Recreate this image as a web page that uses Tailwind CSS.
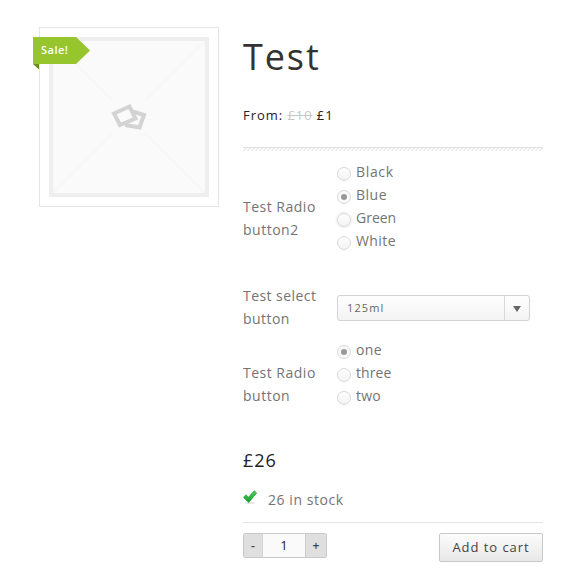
<!DOCTYPE html>
<html lang="en"><head><meta charset="utf-8"><title>Test</title>
<script src="https://cdn.jsdelivr.net/npm/@tailwindcss/browser@4"></script></head>
<body class="bg-white">
<main class="flex w-[576px] h-[572px] overflow-hidden pl-[39px] pt-[27px] font-['Open_Sans',sans-serif] text-[14px] leading-[23px] text-[#747474]">
<div class="relative w-[180px] h-[180px] shrink-0 border border-[#e5e5e5] p-[9px]">
<svg class="w-[160px] h-[160px]" viewBox="0 0 160 160" fill="none">
<rect x="2" y="2" width="156" height="156" fill="#fafafa" stroke="#eee" stroke-width="4"/>
<path d="M4 4 64 64M156 4 96 64M4 156 64 96M156 156 96 96" stroke="#f5f5f5" stroke-width="1.300"/>
<path d="M76 88 90.500 90.500 95 78 84 74.500" stroke="#d3d3d3" stroke-width="4"/>
<path d="M65 76.500 80.500 69.500 86.500 81.500 71 88Z" fill="#fafafa" stroke="#d3d3d3" stroke-width="4"/>
</svg>
<div class="absolute -left-[7px] top-[9px] w-[57px] h-[33px]">
<svg class="absolute inset-0" width="57" height="33"><path d="M0 27H6V32.500Z" fill="#698f1c"/><path d="M0 0H43L57 13.500 43 27H0Z" fill="#96c52d"/></svg>
<span class="absolute left-[8px] top-[1px] text-[11px] tracking-[.5px] font-semibold text-white">Sale!</span>
</div>
</div>
<section class="ml-[24px] w-[300px]">
<h1 class="h-[60px] text-[36px] leading-[60px] tracking-[1.900px] text-[#333]">Test</h1>
<p class="mt-[17px] text-[13px] tracking-[.95px] text-[#222]">From: <del class="text-[#c7c7c7]">£10</del> £1</p>
<svg class="mt-[20px] block" width="300" height="4" shape-rendering="crispEdges"><defs><pattern id="hatch" width="4" height="3" y="1" patternUnits="userSpaceOnUse"><path d="M2 0h1v1H2zM3 0h1v1H3zM1 1h1v1H1zM2 1h1v1H2zM0 2h1v1H0zM1 2h1v1H1z" fill="#ececec"/></pattern></defs><rect width="300" height="1" fill="#e0e0e0"/><rect y="1" width="300" height="3" fill="url(#hatch)"/></svg>
<div class="mt-[10px] flex h-[92px]">
<div class="-mt-px w-[94px] pt-[35px] tracking-[.5px]">Test Radio<br>button2</div>
<div class="tracking-[.4px]">
<div class="flex gap-[5px]"><i class="mt-[6px] size-[14px] rounded-full border border-[#d8d8d8] bg-linear-to-b from-white to-[#f3f3f3]"></i><span class="-mt-px mb-px tracking-[.65px]">Black</span></div>
<div class="flex gap-[5px]"><i class="mt-[6px] grid place-items-center size-[14px] rounded-full border border-[#d8d8d8] bg-[#fafafa]"><b class="size-[6px] rounded-full bg-[#999]"></b></i><span class="-mt-px mb-px tracking-[.5px]">Blue</span></div>
<div class="flex gap-[5px]"><i class="mt-[6px] size-[14px] rounded-full border border-[#d8d8d8] bg-linear-to-b from-white to-[#f3f3f3] shadow-[0_0_3px_#d8d8d8]"></i><span class="-mt-px mb-px tracking-[0px]">Green</span></div>
<div class="flex gap-[5px]"><i class="mt-[6px] size-[14px] rounded-full border border-[#d8d8d8] bg-linear-to-b from-white to-[#f3f3f3]"></i><span class="-mt-px mb-px tracking-[.4px]">White</span></div>
</div></div>
<div class="mt-[32px] flex h-[46px]">
<div class="-mt-px w-[94px] tracking-[.45px]">Test select<br>button</div>
<div class="mt-[10px] flex h-[26px] w-[193px] rounded-[3px] border border-[#d2d2d2] bg-linear-to-b from-white to-[#f3f3f3]">
<span class="flex-1 pl-[9px] text-[11px] leading-[24px] tracking-[1.100px] text-[#666]">125ml</span>
<span class="flex w-[25px] items-center justify-center border-l border-[#d8d8d8]"><svg class="mt-px" width="8" height="6"><path d="M0 0H8L4 6Z" fill="#666"/></svg></span>
</div></div>
<div class="mt-[8px] flex h-[69px]">
<div class="-mt-px w-[94px] pt-[23px] tracking-[.5px]">Test Radio<br>button</div>
<div>
<div class="flex gap-[5px]"><i class="mt-[6px] grid place-items-center size-[14px] rounded-full border border-[#d8d8d8] bg-[#fafafa]"><b class="size-[6px] rounded-full bg-[#999]"></b></i><span class="-mt-px mb-px tracking-[.4px]">one</span></div>
<div class="flex gap-[5px]"><i class="mt-[6px] size-[14px] rounded-full border border-[#d8d8d8] bg-linear-to-b from-white to-[#f3f3f3]"></i><span class="-mt-px mb-px tracking-[.1px]">three</span></div>
<div class="flex gap-[5px]"><i class="mt-[6px] size-[14px] rounded-full border border-[#d8d8d8] bg-linear-to-b from-white to-[#f3f3f3]"></i><span class="-mt-px mb-px tracking-[.2px]">two</span></div>
</div></div>
<p class="mt-[40px] h-[24px] text-[18px] leading-[24px] tracking-[1px] text-[#222]">£26</p>
<div class="mt-[16px] flex h-[23px]"><svg class="mt-[2px] mr-[11px]" width="14" height="15" viewBox="0 0 14 15"><defs><linearGradient id="check" x2="0" y2="1"><stop stop-color="#4bd75a"/><stop offset="1" stop-color="#139b2a"/></linearGradient></defs><ellipse cx="7" cy="13" rx="5" ry="1" fill="#e5e5e5"/><path d="M.5 7.400 3 4.800 5.500 7.300 11.300 .8 13.600 3 5.700 12.500Z" fill="url(#check)" stroke="#22a53a" stroke-width=".8"/></svg><span class="tracking-[.55px]">26 in stock</span></div>
<div class="mt-[11px] flex justify-between border-t border-[#e2e2e2] pt-[10px]">
<div class="flex h-[25px] w-[84px] overflow-hidden rounded-[2px] border border-[#c9c9c9] text-center text-[12px] leading-[23px]">
<span class="w-[19px] border-r border-[#d5d5d5] bg-[#dfdfdf] font-semibold text-[#444]">-</span><span class="flex-1 bg-[#fafafa] text-[13px] text-[#222]">1</span><span class="w-[21px] border-l border-[#c9c9c9] bg-[#dfdfdf] font-semibold text-[#444]">+</span></div>
<button class="h-[29px] w-[104px] rounded-[2px] border border-[#c8c8c8] bg-linear-to-b from-[#fcfcfc] to-[#e8e8e8] text-[13px] tracking-[.95px] leading-[27px] text-[#444]">Add to cart</button>
</div>
</section></main></body></html>
